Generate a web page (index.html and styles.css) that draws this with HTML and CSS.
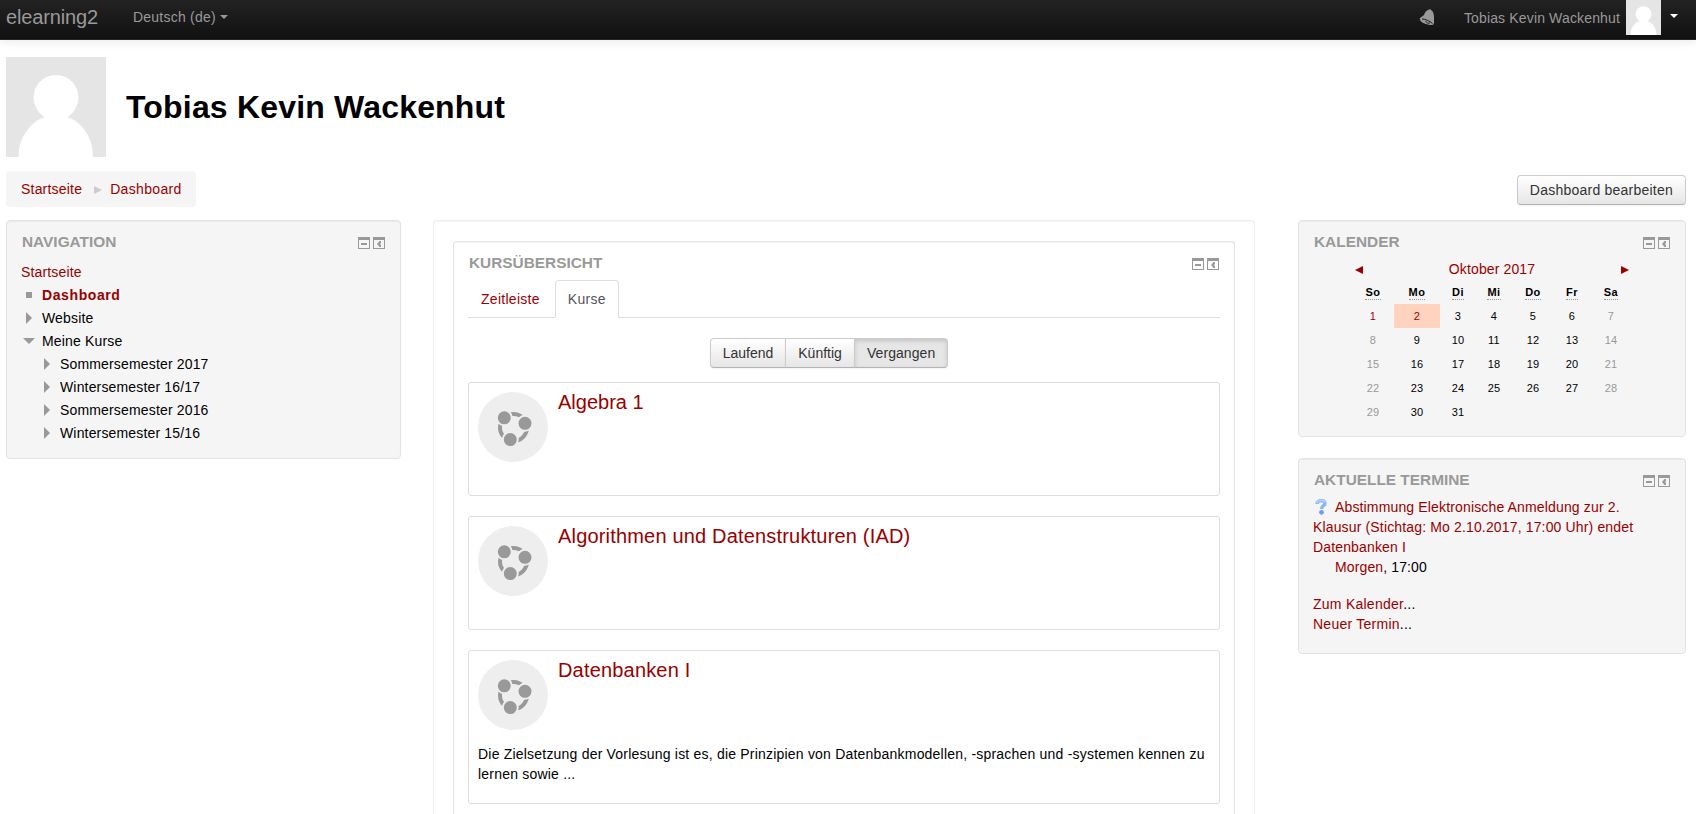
FILE: index.html
```html
<!DOCTYPE html>
<html lang="de">
<head>
<meta charset="utf-8">
<title>Dashboard</title>
<link rel="stylesheet" href="styles.css">
</head>
<body>
<svg class="sprites" width="0" height="0">
  <symbol id="dock" viewBox="0 0 27 12">
    <path fill="#999" fill-rule="evenodd" d="M0 0h12v12H0zM1 3v8h10V3zM15 0h12v12H15zM16 3v8h10V3z"/>
    <path fill="#999" d="M3 6h6v2H3zM19 7l2.500-3H23v2l-1 1 1 1v2h-1.500z"/>
  </symbol>
  <symbol id="course" viewBox="0 0 70 70">
    <circle cx="35" cy="35" r="35" fill="#eee"/>
    <circle cx="35.500" cy="35.500" r="13.500" fill="none" stroke="#999" stroke-width="4"/>
    <g fill="#999" stroke="#eee" stroke-width="2">
      <circle cx="26.300" cy="25.800" r="7.500"/><circle cx="47" cy="31.300" r="7.500"/><circle cx="32.300" cy="47.600" r="7.500"/>
    </g>
  </symbol>
  <symbol id="person" viewBox="0 0 100 100">
    <path fill="#e5e5e5" d="M0 0h100v100H0z"/>
    <circle cx="50" cy="40.500" r="22.500" fill="#fff"/>
    <path fill="#fff" d="M12.500 100c0-20 12-35 26-40h23c14 5 25.500 20 25.500 40z"/>
  </symbol>
</svg>

<header class="navbar">
  <a class="brand">elearning2</a>
  <a class="lang">Deutsch (de)<i class="caret"></i></a>
  <div class="user">
    <svg class="bell" viewBox="0 0 16 17"><path fill="#999" d="M9 1c2-1 3-1 3 0 2 1 3 4 3 7v6c0 2.500-4 2.500-8 1-4-1-7-4-6-6l4-3c1-3 2-4 4-5z"/><path d="M3 10c3 0 8 2 10.500 4.500M6.500 12c1 2 3.500 3 4.500 1.500" fill="none" stroke="#181818" stroke-width="1"/></svg>
    <span>Tobias Kevin Wackenhut</span>
    <svg class="thumb"><use href="#person"/></svg>
    <i class="caret light"></i>
  </div>
</header>

<div class="page">
  <div class="profile">
    <svg class="avatar"><use href="#person"/></svg>
    <h1>Tobias Kevin Wackenhut</h1>
  </div>
  <div class="subbar">
    <nav class="breadcrumb"><a>Startseite</a><svg class="sep" viewBox="0 0 8 8"><path fill="#ccc" d="M0 0l8 4-8 4z"/></svg><a class="here">Dashboard</a></nav>
    <button class="btn">Dashboard bearbeiten</button>
  </div>

  <div class="columns">
    <aside class="block nav">
      <div class="head"><h2>Navigation</h2><svg class="dock"><use href="#dock"/></svg></div>
      <ul class="tree">
        <li class="root"><a>Startseite</a></li>
        <li><i class="dot"></i><a class="current">Dashboard</a></li>
        <li><i class="right"></i>Website</li>
        <li><i class="down"></i>Meine Kurse</li>
        <li class="sub"><i class="right"></i>Sommersemester 2017</li>
        <li class="sub"><i class="right"></i>Wintersemester 16/17</li>
        <li class="sub"><i class="right"></i>Sommersemester 2016</li>
        <li class="sub"><i class="right"></i>Wintersemester 15/16</li>
      </ul>
    </aside>

    <main class="region">
      <section class="block overview">
        <div class="head"><h2>Kursübersicht</h2><svg class="dock"><use href="#dock"/></svg></div>
        <div class="tabs"><a class="tab">Zeitleiste</a><a class="tab active">Kurse</a></div>
        <div class="group"><button class="btn">Laufend</button><button class="btn">Künftig</button><button class="btn pressed">Vergangen</button></div>
        <article class="card"><div class="top"><svg class="course"><use href="#course"/></svg><h3 class="short">Algebra 1</h3></div></article>
        <article class="card"><div class="top"><svg class="course"><use href="#course"/></svg><h3>Algorithmen und Datenstrukturen (IAD)</h3></div></article>
        <article class="card long"><div class="top"><svg class="course"><use href="#course"/></svg><h3>Datenbanken I</h3></div>
          <p>Die Zielsetzung der Vorlesung ist es, die Prinzipien von Datenbankmodellen, -sprachen und -systemen kennen zu lernen sowie ...</p></article>
      </section>
    </main>

    <aside class="side">
      <section class="block calendar">
        <div class="head"><h2>Kalender</h2><svg class="dock"><use href="#dock"/></svg></div>
        <div class="month"><svg class="arrow" viewBox="0 0 8 8"><path fill="#900" d="M8 0v8L0 4z"/></svg><a>Oktober 2017</a><svg class="arrow" viewBox="0 0 8 8"><path fill="#900" d="M0 0v8l8-4z"/></svg></div>
        <div class="days">
          <b><abbr>So</abbr></b><b><abbr>Mo</abbr></b><b><abbr>Di</abbr></b><b><abbr>Mi</abbr></b><b><abbr>Do</abbr></b><b><abbr>Fr</abbr></b><b><abbr>Sa</abbr></b>
          <span class="link">1</span><span class="link today">2</span><span>3</span><span>4</span><span>5</span><span>6</span><span class="off">7</span>
          <span class="off">8</span><span>9</span><span>10</span><span>11</span><span>12</span><span>13</span><span class="off">14</span>
          <span class="off">15</span><span>16</span><span>17</span><span>18</span><span>19</span><span>20</span><span class="off">21</span>
          <span class="off">22</span><span>23</span><span>24</span><span>25</span><span>26</span><span>27</span><span class="off">28</span>
          <span class="off">29</span><span>30</span><span>31</span>
        </div>
      </section>
      <section class="block events">
        <div class="head"><h2>Aktuelle Termine</h2><svg class="dock"><use href="#dock"/></svg></div>
        <div class="event">
          <svg class="question" viewBox="0 0 16 16"><path d="M4 5C4 .5 12 .5 12 4.500 12 7 8.500 6.500 8.500 10" fill="none" stroke="#86b5f3" stroke-width="3.400"/><path d="M4 4C5 .5 11 .5 12 3.500" fill="none" stroke="#b3d3fa" stroke-width="1.500"/><circle cx="8.500" cy="13.300" r="2.400" fill="#6a9df0"/></svg><a>Abstimmung Elektronische Anmeldung zur 2. Klausur (Stichtag: Mo 2.10.2017, 17:00 Uhr) endet</a><br><a>Datenbanken I</a>
          <div class="when"><a>Morgen</a>, 17:00</div>
        </div>
        <div class="more"><a>Zum Kalender</a>...<br><a>Neuer Termin</a>...</div>
      </section>
    </aside>
  </div>
</div>
</body>
</html>
```
FILE: styles.css
```css
* { box-sizing: border-box; }
html, body { height: 100%; }
body { margin: 0; background: #fff; color: #000; font: 14px/20px "Liberation Sans", Arial, sans-serif; letter-spacing: .2px; display: flex; flex-direction: column; }
h1, h2, h3, p, ul { margin: 0; padding: 0; }
a { color: #900; }
svg { display: block; flex: none; }
.sprites { position: absolute; }

.navbar { flex: none; height: 40px; padding: 0 18px 0 6px; display: flex; align-items: flex-start; background: linear-gradient(#222, #111); border-bottom: 1px solid #252525; box-shadow: 0 1px 10px rgba(0, 0, 0, .1); color: #999; }
.navbar a { color: #999; }
.brand { width: 127px; padding-top: 7px; font-size: 20px; letter-spacing: -.15px; }
.lang { padding-top: 7px; display: flex; align-items: center; letter-spacing: .22px; }
.caret { width: 0; height: 0; margin-left: 4px; border: 4px solid transparent; border-top-color: #999; border-bottom: 0; }
.user { margin-left: auto; display: flex; align-items: flex-start; letter-spacing: .15px; }
.user span { margin: 8px 6px 0 29px; }
.bell { width: 16px; height: 17px; margin-top: 9px; }
.thumb { width: 35px; height: 35px; }
.light { margin: 14px 0 0 9px; border-top-color: #fff; }

.page { flex: 1; min-height: 0; padding: 17px 10px 0 6px; }
.profile { display: flex; align-items: center; gap: 20px; height: 100px; }
.avatar { width: 100px; height: 100px; }
h1 { font-size: 32px; line-height: 40px; letter-spacing: .18px; }
.subbar { display: flex; align-items: flex-start; justify-content: space-between; margin-top: 14px; height: 49px; }
.breadcrumb { display: flex; align-items: center; height: 36px; padding: 0 14px 0 15px; border-radius: 4px; background: #f5f5f5; }
.here { letter-spacing: .34px; }
.sep { width: 8px; height: 8px; margin: 2px 8px 0 12px; }
.btn { height: 30px; padding: 4px 12px; margin: 4px 0 0; font: 14px/20px "Liberation Sans", Arial, sans-serif; letter-spacing: .23px; color: #333; border: 1px solid #ccc; border-bottom-color: #b3b3b3; border-radius: 4px; background: linear-gradient(#fff, #e6e6e6); box-shadow: inset 0 1px 0 rgba(255, 255, 255, .2), 0 1px 2px rgba(0, 0, 0, .05); }

.columns { display: grid; grid-template-columns: 395px 822px 388px; column-gap: 32px; align-items: start; }
.columns > .side { margin-left: 11px; width: 388px; }
.block { background: #f5f5f5; border: 1px solid #e3e3e3; border-radius: 4px; box-shadow: inset 0 1px 1px rgba(0, 0, 0, .05); padding: 0 14px; }
.head { display: flex; justify-content: space-between; padding: 11px 1px 0; height: 40px; }
h2 { font-size: 15.4px; line-height: 20px; letter-spacing: 0; color: #999; text-transform: uppercase; }
.dock { width: 27px; height: 12px; margin-top: 5px; }

.nav { height: 239px; }
.tree { list-style: none; margin: -1px 0 0 -1px; }
.tree li { display: flex; align-items: center; height: 23px; letter-spacing: .16px; }
.tree li.root { padding-left: 1px; }
.tree i { width: 22px; height: 12px; display: flex; align-items: center; justify-content: center; padding-right: 4px; }
.tree li.sub { padding-left: 18px; }
.tree i::before { content: ""; }
.dot::before { width: 6px; height: 6px; background: #999; }
.right::before { border: 6px solid transparent; border-left-color: #999; border-right: 0; }
.down::before { border: 6px solid transparent; border-top-color: #999; border-bottom: 0; }
.current { font-weight: bold; letter-spacing: .6px; }

.region { border: 1px solid #eee; border-bottom: 0; border-radius: 4px 4px 0 0; padding: 20px 19px 0; height: 594px; box-shadow: inset 0 1px 1px rgba(0, 0, 0, .05); }
.overview { background: #fff; height: 573px; border-bottom: 0; border-radius: 4px 4px 0 0; }
.tabs { display: flex; height: 38px; border-bottom: 1px solid #ddd; margin-top: -2px; }
.tab { height: 38px; padding: 8px 12px; border: 1px solid transparent; border-radius: 4px 4px 0 0; margin-right: 2px; letter-spacing: .28px; }
.active { color: #555; background: #fff; border-color: #ddd #ddd #fff; }
.group { display: flex; justify-content: center; margin: 20px 29px 14px 0; }
.group .btn { margin: 0 0 0 -1px; border-radius: 0; letter-spacing: 0; }
.group .btn:first-child { border-radius: 4px 0 0 4px; }
.group .btn:last-child { border-radius: 0 4px 4px 0; letter-spacing: .08px; }
.group .pressed { background: #e6e6e6; box-shadow: inset 0 2px 4px rgba(0, 0, 0, .15), 0 1px 2px rgba(0, 0, 0, .05); }
.card { height: 114px; margin-bottom: 20px; padding: 9px; border: 1px solid #ddd; border-radius: 3px; }
.long { height: 154px; margin-bottom: 0; }
.top { display: flex; gap: 10px; }
.course { width: 70px; height: 70px; }
h3 { font-size: 20px; line-height: 20px; font-weight: normal; letter-spacing: .18px; color: #900; }
.short { letter-spacing: 0; }
.card p { margin-top: 14px; letter-spacing: .205px; }

.calendar { height: 217px; }
.month { display: flex; align-items: center; justify-content: space-between; width: 274px; height: 20px; margin: -2px auto 0; letter-spacing: .13px; }
.arrow { width: 8px; height: 8px; margin-top: 2px; }
.days { display: grid; grid-template-columns: 42px 46px 36px 36px 42px 36px 42px; grid-auto-rows: 24px; width: 280px; margin: 1px auto 0; text-align: center; font-size: 11px; line-height: 24px; }
.days abbr { display: inline-block; line-height: 13px; border-bottom: 1px dotted #999; }
.days b { line-height: 24px; letter-spacing: .5px; }
.off { color: #999; }
.link { color: #900; }
.today { background: #ffd3bd; }

.events { height: 196px; margin-top: 21px; }
.event { margin-top: -2px; letter-spacing: .15px; }
.question { display: inline-block; width: 16px; height: 16px; margin-right: 6px; vertical-align: -3px; }
.when { padding-left: 22px; letter-spacing: .12px; }
.more { margin-top: 17px; letter-spacing: .25px; }
```
